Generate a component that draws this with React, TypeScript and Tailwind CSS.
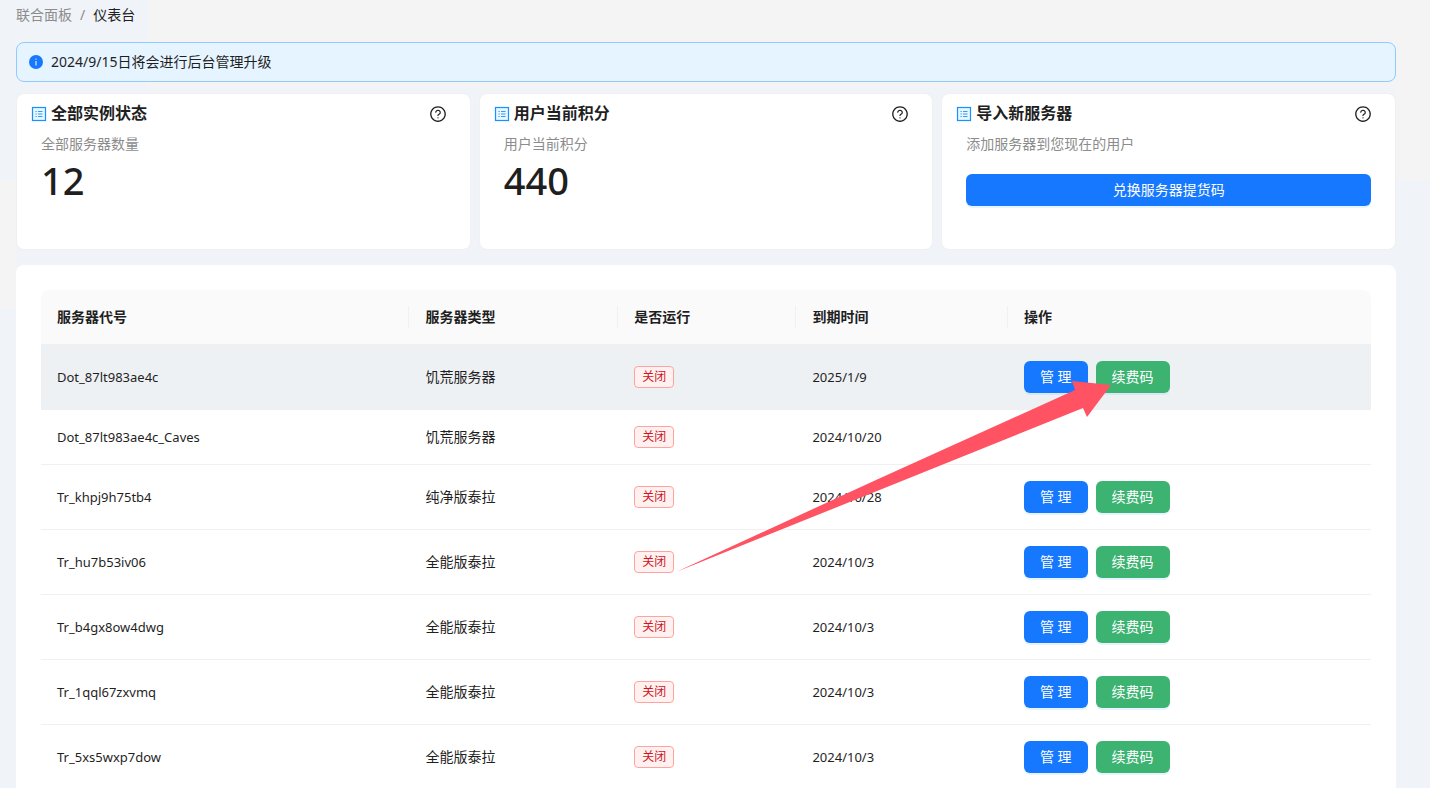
import type { ReactNode } from "react";

type Server = {
  id: string;
  kind: string;
  expires: string;
  actions: boolean;
  highlighted?: boolean;
};

const servers: Server[] = [
  { id: "Dot_87lt983ae4c", kind: "饥荒服务器", expires: "2025/1/9", actions: true, highlighted: true },
  { id: "Dot_87lt983ae4c_Caves", kind: "饥荒服务器", expires: "2024/10/20", actions: false },
  { id: "Tr_khpj9h75tb4", kind: "纯净版泰拉", expires: "2024/10/28", actions: true },
  { id: "Tr_hu7b53iv06", kind: "全能版泰拉", expires: "2024/10/3", actions: true },
  { id: "Tr_b4gx8ow4dwg", kind: "全能版泰拉", expires: "2024/10/3", actions: true },
  { id: "Tr_1qql67zxvmq", kind: "全能版泰拉", expires: "2024/10/3", actions: true },
  { id: "Tr_5xs5wxp7dow", kind: "全能版泰拉", expires: "2024/10/3", actions: true },
];

const columns = [
  { title: "服务器代号", width: "w-[27.7%]" },
  { title: "服务器类型", width: "w-[15.7%]" },
  { title: "是否运行", width: "w-[13.4%]" },
  { title: "到期时间", width: "w-[15.9%]" },
  { title: "操作", width: "" },
];

function ListIcon() {
  return (
    <svg viewBox="0 0 16 16" className="size-4 shrink-0" aria-hidden="true">
      <rect x="1.5" y="1.5" width="13" height="13" fill="#e6f7ff" stroke="#1890ff" strokeWidth="1.2" />
      <path d="M4.500 5.500h1.200M4.500 8h1.200M4.500 10.500h1.200M7 5.500h4.500M7 8h4.500M7 10.500h4.500" stroke="#1890ff" strokeWidth="0.900" />
    </svg>
  );
}

function HelpIcon() {
  return (
    <svg viewBox="0 0 1024 1024" className="size-[18px]" fill="currentColor" aria-hidden="true">
      <path d="M512 64C264.600 64 64 264.600 64 512s200.600 448 448 448 448-200.600 448-448S759.400 64 512 64zm0 820c-205.400 0-372-166.600-372-372s166.600-372 372-372 372 166.600 372 372-166.600 372-372 372z" />
      <path d="M623.600 316.700C593.600 290.400 554 276 512 276s-81.600 14.500-111.600 40.700C369.200 344 352 380.700 352 420v7.600c0 4.400 3.600 8 8 8h48c4.400 0 8-3.600 8-8V420c0-44.100 43.100-80 96-80s96 35.900 96 80c0 31.100-22 59.600-56.100 72.700-21.200 8.100-39.200 22.300-52.100 40.900-13.100 19-19.900 41.800-19.900 64.900V620c0 4.400 3.600 8 8 8h48c4.400 0 8-3.600 8-8v-22.700a48.300 48.300 0 0 1 30.900-44.800c59-22.700 97.100-74.700 97.100-132.500.1-39.300-17.100-76-48.300-103.300zM472 732a40 40 0 1 0 80 0 40 40 0 1 0-80 0z" />
    </svg>
  );
}

function InfoIcon() {
  return (
    <svg viewBox="0 0 14 14" className="size-3.5 shrink-0" aria-hidden="true">
      <circle cx="7" cy="7" r="7" fill="#1677ff" />
      <path d="M7 6v4.500M7 3.500v1.200" stroke="#fff" strokeWidth="1" />
    </svg>
  );
}

function StatCard({ title, caption, children }: { title: string; caption: string; children: ReactNode }) {
  return (
    <section className="h-[157px] rounded-lg border border-[#f0f0f0] bg-white">
      <header className="flex h-[39px] items-center gap-1 pr-[23px] pl-3.5">
        <ListIcon />
        <h2 className="text-base leading-[23px] font-bold">{title}</h2>
        <button type="button" aria-label={`${title}说明`} className="ml-auto text-[#1f1f1f]">
          <HelpIcon />
        </button>
      </header>
      <div className="px-6">
        <p className="text-sm leading-[22px] text-[#8c8c8c]">{caption}</p>
        {children}
      </div>
    </section>
  );
}

function ActionButton({ children, tone }: { children: ReactNode; tone: "blue" | "green" }) {
  const color = tone === "blue" ? "bg-[#1677ff]" : "bg-[#3cb371]";
  return (
    <button
      type="button"
      className={`${color} h-8 rounded-md px-4 text-sm whitespace-pre text-white shadow-[0_2px_0_rgba(5,145,255,0.1)]`}
    >
      {children}
    </button>
  );
}

export default function App() {
  return (
    <div className="relative h-screen overflow-hidden pr-[34px] pl-4 font-['Noto_Sans','Noto_Sans_CJK_SC',sans-serif] text-sm text-[#1f1f1f] [background:linear-gradient(#f4f4f4,#f4f4f4)_148px_0/100%_88px_no-repeat,linear-gradient(#f4f4f4,#f4f4f4)_100%_0/34px_180px_no-repeat,linear-gradient(#f4f4f4,#f4f4f4)_0_180px/16px_128px_no-repeat,#f0f3f8]">
      <nav aria-label="breadcrumb" className="flex h-[42px] items-start gap-2 pt-1 leading-[22px]">
        <a href="#panel" className="text-[#8c8c8c]">联合面板</a>
        <span className="text-[#8c8c8c]">/</span>
        <span>仪表台</span>
      </nav>

      <div role="alert" className="flex h-10 items-center gap-2 rounded-lg border border-[#91caff] bg-[#e6f4ff] px-3">
        <InfoIcon />
        <span>2024/9/15日将会进行后台管理升级</span>
      </div>

      <div className="mt-[11px] grid grid-cols-3 gap-2">
        <StatCard title="全部实例状态" caption="全部服务器数量">
          <p className="mt-0.5 text-[38px] leading-[46px] font-medium">12</p>
        </StatCard>
        <StatCard title="用户当前积分" caption="用户当前积分">
          <p className="mt-0.5 text-[38px] leading-[46px] font-medium">440</p>
        </StatCard>
        <StatCard title="导入新服务器" caption="添加服务器到您现在的用户">
          <button
            type="button"
            className="mt-[19px] h-8 w-full rounded-md bg-[#1677ff] text-sm text-white shadow-[0_2px_0_rgba(5,145,255,0.1)]"
          >
            兑换服务器提货码
          </button>
        </StatCard>
      </div>

      <main className="mt-[15px] rounded-lg bg-white p-[25px]">
        <table className="w-full table-fixed border-separate border-spacing-0 text-left">
          <thead>
            <tr className="h-[55px]">
              {columns.map((column, index) => (
                <th
                  key={column.title}
                  className={`${column.width} border-b border-[#f0f0f0] bg-[#fafafa] p-0 font-bold first:rounded-tl-lg last:rounded-tr-lg`}
                >
                  <div className={`px-4 leading-[22px] ${index < columns.length - 1 ? "border-r border-[#f0f0f0]" : ""}`}>
                    {column.title}
                  </div>
                </th>
              ))}
            </tr>
          </thead>
          <tbody>
            {servers.map((server) => (
              <tr
                key={server.id}
                className={`${server.actions ? "h-[65px]" : "h-[55px]"} ${server.highlighted ? "bg-[#eef1f4]" : "bg-white"}`}
              >
                <td className="border-b border-[#f0f0f0] px-4 py-0 text-[13px]">{server.id}</td>
                <td className="border-b border-[#f0f0f0] px-4 py-0">{server.kind}</td>
                <td className="border-b border-[#f0f0f0] px-4 py-0">
                  <span className="inline-block rounded border border-[#ffa39e] bg-[#fff1f0] px-[7px] align-middle text-xs leading-5 text-[#cf1322]">
                    关闭
                  </span>
                </td>
                <td className="border-b border-[#f0f0f0] px-4 py-0 text-[13px]">{server.expires}</td>
                <td className="border-b border-[#f0f0f0] px-4 py-0">
                  {server.actions && (
                    <div className="flex gap-2">
                      <ActionButton tone="blue">管 理</ActionButton>
                      <ActionButton tone="green">续费码</ActionButton>
                    </div>
                  )}
                </td>
              </tr>
            ))}
          </tbody>
        </table>
      </main>

      <svg
        viewBox="0 0 436 191"
        className="pointer-events-none absolute top-[381px] left-[676px] h-[191px] w-[436px] overflow-visible"
        aria-hidden="true"
      >
        <path d="M0 191L200 99 399 9 396 0 435 4 411 36 407 27Z" fill="#ff5263" />
      </svg>
    </div>
  );
}
